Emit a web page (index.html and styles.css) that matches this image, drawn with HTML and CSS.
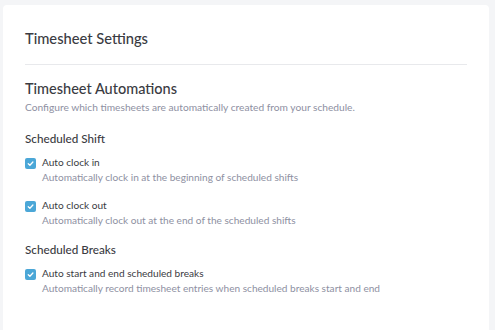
FILE: index.html
```html
<!DOCTYPE html>
<html lang="en">
<head>
    <meta charset="UTF-8">
    <title>Timesheet Settings</title>
    <link rel="stylesheet" href="styles.css">
</head>
<body>
<div class="page">
    <div class="card">
        <h1 class="card-title">Timesheet Settings</h1>
        <div class="divider"></div>

        <h2 class="section-title">Timesheet Automations</h2>
        <p class="section-desc">Configure which timesheets are automatically created from your schedule.</p>

        <h3 class="group-title">Scheduled Shift</h3>
        <div class="option">
            <span class="check"><svg viewBox="0 0 12 12" width="9" height="9"><path d="M3 6.3 L5.2 8.3 L9.2 4" fill="none" stroke="#fff" stroke-width="1.7" stroke-linecap="round" stroke-linejoin="round"/></svg></span>
            <div class="option-text">
                <div class="option-label">Auto clock in</div>
                <div class="option-desc">Automatically clock in at the beginning of scheduled shifts</div>
            </div>
        </div>
        <div class="option">
            <span class="check"><svg viewBox="0 0 12 12" width="9" height="9"><path d="M3 6.3 L5.2 8.3 L9.2 4" fill="none" stroke="#fff" stroke-width="1.7" stroke-linecap="round" stroke-linejoin="round"/></svg></span>
            <div class="option-text">
                <div class="option-label">Auto clock out</div>
                <div class="option-desc">Automatically clock out at the end of the scheduled shifts</div>
            </div>
        </div>

        <h3 class="group-title group-next">Scheduled Breaks</h3>
        <div class="option">
            <span class="check"><svg viewBox="0 0 12 12" width="9" height="9"><path d="M3 6.3 L5.2 8.3 L9.2 4" fill="none" stroke="#fff" stroke-width="1.7" stroke-linecap="round" stroke-linejoin="round"/></svg></span>
            <div class="option-text">
                <div class="option-label">Auto start and end scheduled breaks</div>
                <div class="option-desc">Automatically record timesheet entries when scheduled breaks start and end</div>
            </div>
        </div>
    </div>
</div>
</body>
</html>
```

FILE: styles.css
```css
html,body{
    margin: 0;
    height: 100%;
    overflow: hidden;
}
body{
    background-color: #f4f5f7;
    font-family: Lato, "Noto Sans", sans-serif;
    color: #3a3b42;
}
.page{
    padding: 5px 6px 0 3px;
}
.card{
    background-color: #fff;
    border-radius: 4px;
    padding: 24px 22px 0 22px;
    height: 340px;
}
.card-title{
    font-size: 14.7px;
    font-weight: 500;
    line-height: 18px;
    margin: 0;
}
.divider{
    height: 1px;
    background-color: #e8e9ec;
    margin-top: 17px;
}
.section-title{
    font-size: 14.5px;
    font-weight: 500;
    line-height: 18px;
    margin: 15px 0 0;
}
.section-desc{
    font-size: 10.2px;
    line-height: 15px;
    color: #8e90a2;
    margin: 2px 0 0;
}
.group-title{
    font-size: 11.7px;
    font-weight: 500;
    line-height: 15px;
    margin: 16px 0 0;
}
.group-title.group-next{
    margin-top: 14px;
}
.option{
    display: flex;
    gap: 6px;
    margin-top: 9px;
}
.option + .option{
    margin-top: 13px;
}
.check{
    width: 11px;
    height: 11px;
    border-radius: 2px;
    background-color: #4ba7d7;
    display: flex;
    align-items: center;
    justify-content: center;
    margin-top: 3px;
    flex-shrink: 0;
}
.option-label{
    font-size: 10.1px;
    line-height: 15px;
}
.option-desc{
    font-size: 10.1px;
    line-height: 15px;
    color: #8e90a2;
}
```
